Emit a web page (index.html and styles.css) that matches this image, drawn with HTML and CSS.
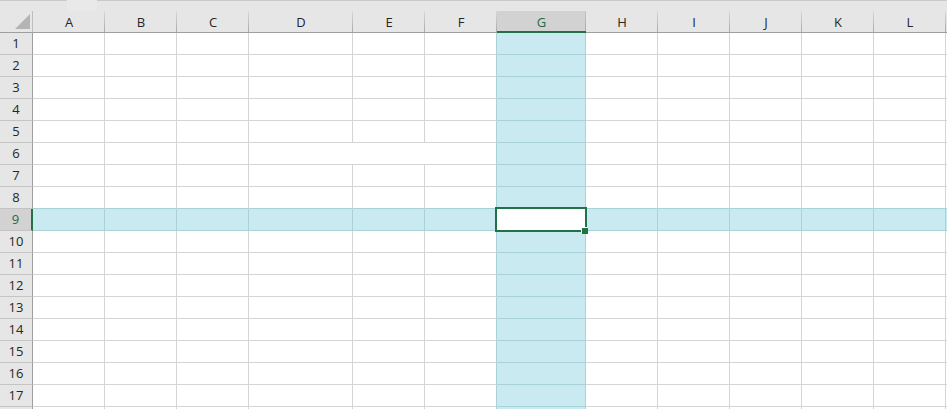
FILE: index.html
```html
<!DOCTYPE html>
<html>
<head>
<meta charset="utf-8">
<link rel="stylesheet" href="styles.css">
</head>
<body>
<div class="topbar"><span class="tb-a"></span><span class="tb-b"></span><span class="tb-c"></span></div>
<div class="sheet">
  <div class="row head">
    <div class="corner"><span class="tri"></span></div>
    <div>A</div><div>B</div><div>C</div><div>D</div><div>E</div><div class="f">F</div><div class="g">G</div><div>H</div><div>I</div><div>J</div><div>K</div><div>L</div><div></div>
  </div>
  <div class="row"><div class="rh">1</div><div></div><div></div><div></div><div></div><div></div><div class="f"></div><div class="g"></div><div></div><div></div><div></div><div></div><div></div><div></div></div>
  <div class="row"><div class="rh">2</div><div></div><div></div><div></div><div></div><div></div><div class="f"></div><div class="g"></div><div></div><div></div><div></div><div></div><div></div><div></div></div>
  <div class="row"><div class="rh">3</div><div></div><div></div><div></div><div></div><div></div><div class="f"></div><div class="g"></div><div></div><div></div><div></div><div></div><div></div><div></div></div>
  <div class="row"><div class="rh">4</div><div></div><div></div><div></div><div></div><div></div><div class="f"></div><div class="g"></div><div></div><div></div><div></div><div></div><div></div><div></div></div>
  <div class="row"><div class="rh">5</div><div></div><div></div><div></div><div></div><div></div><div class="f"></div><div class="g"></div><div></div><div></div><div></div><div></div><div></div><div></div></div>
  <div class="row"><div class="rh">6</div><div></div><div></div><div></div><div class="merge f"></div><div class="g"></div><div></div><div></div><div></div><div></div><div></div><div></div></div>
  <div class="row"><div class="rh">7</div><div></div><div></div><div></div><div></div><div></div><div class="f"></div><div class="g"></div><div></div><div></div><div></div><div></div><div></div><div></div></div>
  <div class="row pre"><div class="rh">8</div><div></div><div></div><div></div><div></div><div></div><div class="f"></div><div class="g"></div><div></div><div></div><div></div><div></div><div></div><div></div></div>
  <div class="row sel"><div class="rh">9</div><div></div><div></div><div></div><div></div><div></div><div class="f"></div><div class="g active"></div><div></div><div></div><div></div><div></div><div></div><div></div></div>
  <div class="row"><div class="rh">10</div><div></div><div></div><div></div><div></div><div></div><div class="f"></div><div class="g"></div><div></div><div></div><div></div><div></div><div></div><div></div></div>
  <div class="row"><div class="rh">11</div><div></div><div></div><div></div><div></div><div></div><div class="f"></div><div class="g"></div><div></div><div></div><div></div><div></div><div></div><div></div></div>
  <div class="row"><div class="rh">12</div><div></div><div></div><div></div><div></div><div></div><div class="f"></div><div class="g"></div><div></div><div></div><div></div><div></div><div></div><div></div></div>
  <div class="row"><div class="rh">13</div><div></div><div></div><div></div><div></div><div></div><div class="f"></div><div class="g"></div><div></div><div></div><div></div><div></div><div></div><div></div></div>
  <div class="row"><div class="rh">14</div><div></div><div></div><div></div><div></div><div></div><div class="f"></div><div class="g"></div><div></div><div></div><div></div><div></div><div></div><div></div></div>
  <div class="row"><div class="rh">15</div><div></div><div></div><div></div><div></div><div></div><div class="f"></div><div class="g"></div><div></div><div></div><div></div><div></div><div></div><div></div></div>
  <div class="row"><div class="rh">16</div><div></div><div></div><div></div><div></div><div></div><div class="f"></div><div class="g"></div><div></div><div></div><div></div><div></div><div></div><div></div></div>
  <div class="row"><div class="rh">17</div><div></div><div></div><div></div><div></div><div></div><div class="f"></div><div class="g"></div><div></div><div></div><div></div><div></div><div></div><div></div></div>
  <div class="row"><div class="rh"></div><div></div><div></div><div></div><div></div><div></div><div class="f"></div><div class="g"></div><div></div><div></div><div></div><div></div><div></div><div></div></div>
</div>
</body>
</html>
```
FILE: styles.css
```css
html, body {
  margin: 0;
  padding: 0;
  width: 947px;
  height: 409px;
  overflow: hidden;
  background: #ffffff;
  font-family: "Open Sans", "Noto Sans", "Liberation Sans", sans-serif;
  font-size: 13px;
  color: #262626;
}

.topbar {
  display: flex;
  height: 11px;
  background: #e6e6e6;
}
.tb-a { width: 67px; border-top: 1px solid #c9c9c9; }
.tb-b { width: 30px; background: #e9e9e9; }
.tb-c { flex: 1; border-top: 1px solid #c9c9c9; }

.sheet {
  width: 1100px;
}

.row {
  display: grid;
  grid-template-columns: 33px 72px 72px 72px 104px 72px 72px 89px 72px 72px 72px 72px 72px 72px;
  height: 22px;
}

.row > div {
  box-sizing: border-box;
  border-right: 1px solid #d4d4d4;
  border-bottom: 1px solid #d4d4d4;
}

.row > .merge {
  grid-column: span 3;
}

/* highlighted column G */
.row > .f {
  border-right-color: #a9d2d8;
}
.row > .g {
  background: #c8eaf0;
  border-right-color: #a9d2d8;
  border-bottom-color: #a9d2d8;
}

/* column headers */
.row.head > div {
  background: #e6e6e6 linear-gradient(#d9d9d9, #a9a9a9) right top / 1px 100% no-repeat;
  border-right: none;
  border-bottom: 1px solid #9e9e9e;
  display: flex;
  align-items: center;
  justify-content: center;
  line-height: 1;
  padding-top: 1px;
}
.row.head > .corner {
  background: #e6e6e6;
  border-right: 1px solid #bdbdbd;
  justify-content: flex-end;
  align-items: flex-end;
  padding: 0 2px 3px 0;
}
.tri {
  width: 15px;
  height: 15px;
  background: #b4b4b4;
  clip-path: polygon(100% 0, 100% 100%, 0 100%);
}
.row.head > .g {
  background: #d2d2d2 linear-gradient(#c4c4c4, #a9a9a9) right top / 1px 100% no-repeat;
  border-bottom: 2px solid #217346;
  color: #1d6a44;
  padding-top: 2px;
}

/* row headers */
.row > .rh {
  background: #e6e6e6;
  border-right: 1px solid #9e9e9e;
  border-bottom: 1px solid #c4c4c4;
  display: flex;
  align-items: center;
  justify-content: center;
  line-height: 1;
}

/* row above selected row */
.pre > div:not(.rh) {
  border-bottom-color: #a9d2d8;
}

/* highlighted row 9 */
.sel > div {
  background: #c8eaf0;
  border-right-color: #a9d2d8;
  border-bottom-color: #a9d2d8;
}
.row.sel > .rh {
  background: #d2d2d2;
  border-right: 2px solid #217346;
  border-bottom-color: #c4c4c4;
  color: #1d6a44;
}

/* active cell G9 */
.row.sel > .active {
  position: relative;
  background: #ffffff;
}
.active::before {
  content: "";
  position: absolute;
  left: -2px;
  top: -2px;
  width: 92px;
  height: 25px;
  box-sizing: border-box;
  border: 2px solid #217346;
}
.active::after {
  content: "";
  position: absolute;
  left: 85px;
  top: 19px;
  width: 6px;
  height: 6px;
  background: #217346;
  box-shadow: -1px -1px 0 #ffffff;
}
```
